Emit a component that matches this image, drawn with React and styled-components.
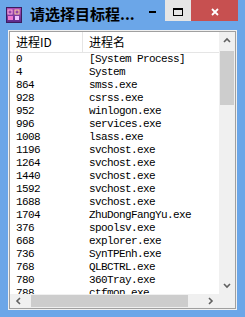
import React from 'react'
import styled, { createGlobalStyle } from 'styled-components'

const processes = [
	['0', '[System Process]'],
	['4', 'System'],
	['864', 'smss.exe'],
	['928', 'csrss.exe'],
	['952', 'winlogon.exe'],
	['996', 'services.exe'],
	['1008', 'lsass.exe'],
	['1196', 'svchost.exe'],
	['1264', 'svchost.exe'],
	['1440', 'svchost.exe'],
	['1592', 'svchost.exe'],
	['1688', 'svchost.exe'],
	['1704', 'ZhuDongFangYu.exe'],
	['376', 'spoolsv.exe'],
	['668', 'explorer.exe'],
	['736', 'SynTPEnh.exe'],
	['768', 'QLBCTRL.exe'],
	['780', '360Tray.exe'],
	['788', 'ctfmon.exe'],
]

const AppIcon = () => (
	<svg width='16' height='16' viewBox='0 0 16 16'>
		<defs>
			<linearGradient id='ig' x1='0' y1='0' x2='0' y2='1'>
				<stop offset='0' stopColor='#b04fb8' />
				<stop offset='1' stopColor='#5a2a8a' />
			</linearGradient>
		</defs>
		<rect x='0.5' y='0.5' width='15' height='15' fill='url(#ig)' stroke='#3c1d5e' />
		<rect x='2' y='3' width='4' height='4' fill='none' stroke='#ffb0e0' strokeWidth='1' />
		<rect x='9' y='3' width='4' height='4' fill='none' stroke='#ffd0a0' strokeWidth='1' />
		<rect x='2' y='9' width='5' height='4' fill='#f07ad0' />
		<rect x='9' y='9' width='4' height='4' fill='#f0c0ff' />
	</svg>
)

const Chevron = ({ dir }) => {
	const pts = {
		up: '1,5 4,2 7,5',
		down: '1,2 4,5 7,2',
		left: '5,1 2,4 5,7',
		right: '2,1 5,4 2,7',
	}
	return (
		<svg width='8' height='8' viewBox='0 0 8 8'>
			<polyline points={pts[dir]} fill='none' stroke='#606060' strokeWidth='1.6' />
		</svg>
	)
}

const App = () => {
	return (
		<>
			<GlobalStyle />
			<Window>
				<TitleBar>
					<IconSlot>
						<AppIcon />
					</IconSlot>
					<Title>请选择目标程...</Title>
					<CaptionButtons>
						<CaptionButton>
							<MinLine />
						</CaptionButton>
						<CaptionButton $bg='#e5e5e5'>
							<MaxBox />
						</CaptionButton>
						<CloseButton>
							<svg width='8' height='8' viewBox='0 0 8 8'>
								<path d='M1 1 L7 7 M7 1 L1 7' stroke='#fff' strokeWidth='1.8' />
							</svg>
						</CloseButton>
					</CaptionButtons>
				</TitleBar>
				<Client>
					<ListBox>
						<Content>
							<Header>
								<HeadCell $w={73}>进程ID</HeadCell>
								<HeadCell>进程名</HeadCell>
							</Header>
							{processes.map(([pid, name], i) => (
								<Row key={i}>
									<Cell $w={73}>{pid}</Cell>
									<Cell>{name}</Cell>
								</Row>
							))}
						</Content>
						<VScroll>
							<ArrowBtn>
								<Chevron dir='up' />
							</ArrowBtn>
							<VThumb />
							<Track />
							<ArrowBtn>
								<Chevron dir='down' />
							</ArrowBtn>
						</VScroll>
						<HScroll>
							<ArrowBtn>
								<Chevron dir='left' />
							</ArrowBtn>
							<HThumb />
							<Track />
							<ArrowBtn>
								<Chevron dir='right' />
							</ArrowBtn>
						</HScroll>
						<Corner />
					</ListBox>
				</Client>
			</Window>
		</>
	)
}

const GlobalStyle = createGlobalStyle`
	html, body {
		margin: 0;
		padding: 0;
		background: #ffffff;
	}
`

const Window = styled.div`
	width: 245px;
	height: 317px;
	background: #6ba6e8;
	display: flex;
	flex-direction: column;
	box-sizing: border-box;
	overflow: hidden;
`

const TitleBar = styled.div`
	height: 30px;
	display: flex;
	align-items: flex-start;
	flex-shrink: 0;
`

const IconSlot = styled.div`
	margin: 7px 0 0 6px;
	width: 16px;
	height: 16px;
	display: flex;
`

const Title = styled.div`
	margin: 5px 0 0 8px;
	font-family: 'Noto Sans CJK SC', sans-serif;
	font-weight: 700;
	font-size: 15px;
	line-height: 18px;
	color: #000;
	flex: 1;
	white-space: nowrap;
`

const CaptionButtons = styled.div`
	display: flex;
	margin-right: 7px;
`

const CaptionButton = styled.div`
	width: 26px;
	height: 21px;
	background: ${(p) => p.$bg || 'transparent'};
	display: flex;
	align-items: center;
	justify-content: center;
	padding-top: 3px;
	box-sizing: border-box;
`

const CloseButton = styled(CaptionButton)`
	width: 47px;
	background: #c75050;
`

const MinLine = styled.div`
	width: 7px;
	height: 2px;
	background: #000;
`

const MaxBox = styled.div`
	width: 8px;
	height: 5px;
	border: 1px solid #000;
	border-top-width: 2px;
`

const Client = styled.div`
	flex: 1;
	min-height: 0;
	margin: 0 8px 7px 8px;
	padding: 1px;
	background: #f0f0f0;
	display: flex;
`

const ListBox = styled.div`
	flex: 1;
	border: 1px solid #a0a0a0;
	background: #fff;
	display: grid;
	grid-template-columns: minmax(0, 1fr) 16px;
	grid-template-rows: minmax(0, 1fr) 14px;
	overflow: hidden;
`

const Content = styled.div`
	overflow: hidden;
	min-height: 0;
`

const Header = styled.div`
	height: 21px;
	display: flex;
	border-bottom: 1px solid #e5e5e5;
	box-sizing: border-box;
`

const HeadCell = styled.div`
	width: ${(p) => (p.$w ? `${p.$w}px` : 'auto')};
	flex: ${(p) => (p.$w ? 'none' : '1')};
	padding-left: 6px;
	box-sizing: border-box;
	border-right: ${(p) => (p.$w ? '1px solid #e5e5e5' : 'none')};
	font-family: 'Noto Sans CJK SC', sans-serif;
	font-size: 12px;
	line-height: 20px;
	color: #000;
	white-space: nowrap;
`

const Row = styled.div`
	height: 13px;
	display: flex;
`

const Cell = styled.div`
	width: ${(p) => (p.$w ? `${p.$w}px` : 'auto')};
	flex: ${(p) => (p.$w ? 'none' : '1')};
	padding-left: 6px;
	box-sizing: border-box;
	font-family: 'Liberation Mono', monospace;
	font-size: 11px;
	letter-spacing: -0.6px;
	line-height: 13px;
	color: #000;
	white-space: nowrap;
`

const VScroll = styled.div`
	grid-row: 1;
	grid-column: 2;
	background: #f0f0f0;
	display: flex;
	flex-direction: column;
	min-height: 0;
`

const HScroll = styled.div`
	grid-row: 2;
	grid-column: 1;
	background: #f0f0f0;
	display: flex;
`

const ArrowBtn = styled.div`
	flex: 0 0 17px;
	display: flex;
	align-items: center;
	justify-content: center;
`

const Track = styled.div`
	flex: 1;
`

const VThumb = styled.div`
	height: 54px;
	margin: 2px 1px 0 1px;
	background: #cdcdcd;
`

const HThumb = styled.div`
	width: 157px;
	margin: 1px 0 1px 4px;
	background: #cdcdcd;
`

const Corner = styled.div`
	grid-row: 2;
	grid-column: 2;
	background: #f0f0f0;
`

export default App
